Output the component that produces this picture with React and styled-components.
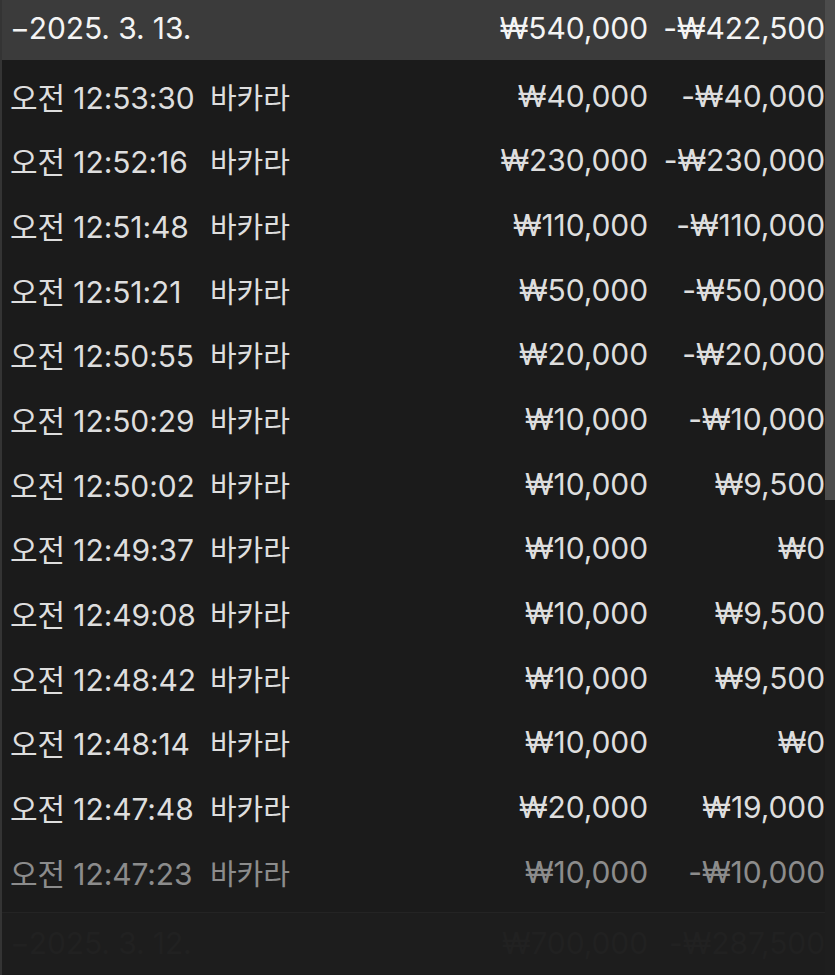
import React from "react";
import styled, { createGlobalStyle } from "styled-components";

const Global = createGlobalStyle`
  html, body { margin: 0; padding: 0; background: #1b1b1b; }
  body { font-family: Inter, "Noto Sans CJK KR", sans-serif; }
`;

const Page = styled.div`
  position: relative;
  width: 835px;
  height: 975px;
  overflow: hidden;
  background: #1b1b1b;
  border-left: 2px solid #343434;
  box-sizing: border-box;
  display: flex;
  flex-direction: column;
  font-family: Inter, "Noto Sans CJK KR", sans-serif;
  font-size: 30px;
  font-weight: 380;
  letter-spacing: -0.1px;
`;

const Line = styled.div`
  display: grid;
  grid-template-columns: 200px 1fr 200px 177px;
  align-items: center;
  padding: 0 10px 0 8px;
  box-sizing: border-box;
  flex: none;
  white-space: nowrap;
`;

const SectionHeader = styled(Line)`
  height: ${(p) => p.$h}px;
  padding-bottom: ${(p) => p.$pb || 0}px;
  background: ${(p) => (p.$dim ? "#1d1d1d" : "#3b3b3b")};
  border-top: ${(p) => (p.$dim ? "1px solid #242424" : "none")};
  color: ${(p) => (p.$dim ? "#212121" : "#f4f4f4")};
`;

const Row = styled(Line)`
  height: 64.67px;
  padding-top: 7px;
  color: #dedede;
  opacity: ${(p) => p.$fade};
`;

const Game = styled.span`
  font-size: 29px;
`;

const Cell = styled.span`
  text-align: ${(p) => (p.$right ? "right" : "left")};
  grid-column: ${(p) => p.$span || "auto"};
`;

const Spacer = styled.div`
  flex: none;
  height: ${(p) => p.$h}px;
`;

const ScrollThumb = styled.div`
  position: absolute;
  top: 0;
  right: 0;
  width: 10px;
  height: 500px;
  background: #4c4c4c;
`;

const ScrollTrack = styled.div`
  position: absolute;
  top: 500px;
  right: 0;
  width: 10px;
  bottom: 0;
  background: #1e1e1e;
`;

const rows = [
  ["12:53:30", "₩40,000", "-₩40,000"],
  ["12:52:16", "₩230,000", "-₩230,000"],
  ["12:51:48", "₩110,000", "-₩110,000"],
  ["12:51:21", "₩50,000", "-₩50,000"],
  ["12:50:55", "₩20,000", "-₩20,000"],
  ["12:50:29", "₩10,000", "-₩10,000"],
  ["12:50:02", "₩10,000", "₩9,500"],
  ["12:49:37", "₩10,000", "₩0"],
  ["12:49:08", "₩10,000", "₩9,500"],
  ["12:48:42", "₩10,000", "₩9,500"],
  ["12:48:14", "₩10,000", "₩0"],
  ["12:47:48", "₩20,000", "₩19,000"],
  ["12:47:23", "₩10,000", "-₩10,000"],
];

export default function App() {
  return (
    <>
      <Global />
      <Page>
        <SectionHeader $h={60} $pb={5}>
          <Cell $span="1 / 3">−2025. 3. 13.</Cell>
          <Cell $right>₩540,000</Cell>
          <Cell $right>-₩422,500</Cell>
        </SectionHeader>
        {rows.map(([t, a, n], i) => (
          <Row key={t} $fade={i === rows.length - 1 ? 0.58 : 1}>
            <Cell>오전 {t}</Cell>
            <Game>바카라</Game>
            <Cell $right>{a}</Cell>
            <Cell $right>{n}</Cell>
          </Row>
        ))}
        <Spacer $h={11} />
        <SectionHeader $h={62} $dim>
          <Cell $span="1 / 3">−2025. 3. 12.</Cell>
          <Cell $right>₩700,000</Cell>
          <Cell $right>-₩287,500</Cell>
        </SectionHeader>
        <ScrollTrack />
        <ScrollThumb />
      </Page>
    </>
  );
}
